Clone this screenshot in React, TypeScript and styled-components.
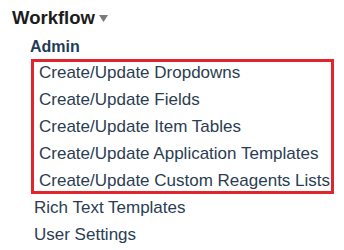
import React from 'react'
import { createGlobalStyle, styled } from 'styled-components'

const GlobalStyles = createGlobalStyle`
  body {
    margin: 0;
    background: #ffffff;
    font-family: "Liberation Sans", Arial, sans-serif;
  }
`

const Page = styled.div`
  padding: 7px 0 0 12px;
`

const Heading = styled.div`
  display: flex;
  align-items: center;
  column-gap: 4px;
  height: 22px;
  font-size: 18.5px;
  font-weight: 700;
  line-height: 22px;
  color: #1c1c1c;
`

const Caret = styled.svg`
  width: 9px;
  height: 7px;
  margin-top: 1px;
  fill: #7a7a7a;
`

const SubHeading = styled.div`
  margin: 8px 0 0 18px;
  font-size: 16px;
  font-weight: 700;
  line-height: 20px;
  color: #1f3b5c;
`

const List = styled.ul`
  margin: 2px 0 0 19px;
  padding: 0;
  list-style: none;
`

const Highlight = styled.li`
  width: 303px;
  box-shadow: inset 0 0 0 3px #e2252d;
`

const Group = styled.ul`
  margin: 0;
  padding: 0;
  list-style: none;
`

const Item = styled.li<{ $inset?: boolean }>`
  padding-left: ${(p) => (p.$inset ? '8px' : '3px')};
  font-size: 17px;
  line-height: 27px;
  color: #2b3d52;
  white-space: nowrap;
`

const highlighted = [
  'Create/Update Dropdowns',
  'Create/Update Fields',
  'Create/Update Item Tables',
  'Create/Update Application Templates',
  'Create/Update Custom Reagents Lists',
]

const others = ['Rich Text Templates', 'User Settings']

export default function App() {
  return (
    <>
      <GlobalStyles />
      <Page>
        <Heading>
          Workflow
          <Caret viewBox="0 0 9 7">
            <polygon points="0,0 9,0 4.5,7" />
          </Caret>
        </Heading>
        <SubHeading>Admin</SubHeading>
        <List>
          <Highlight>
            <Group>
              {highlighted.map((label) => (
                <Item key={label} $inset>
                  {label}
                </Item>
              ))}
            </Group>
          </Highlight>
          {others.map((label) => (
            <Item key={label}>{label}</Item>
          ))}
        </List>
      </Page>
    </>
  )
}
